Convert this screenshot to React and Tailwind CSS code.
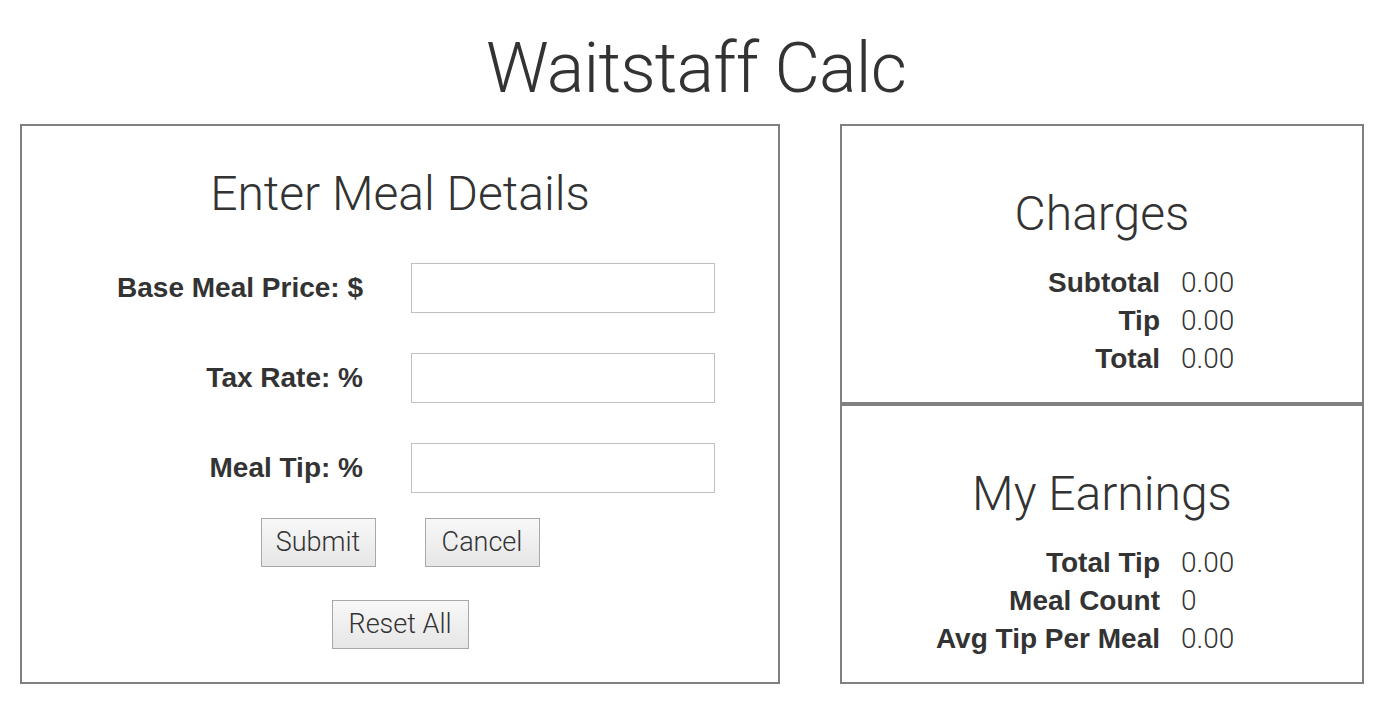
import * as React from "react";

const light = { fontFamily: "Roboto, 'Liberation Sans', sans-serif" };
const bold = { fontFamily: "'Liberation Sans', Arial, sans-serif" };

function Field({ label }) {
  return (
    <div className="flex items-center h-[50px]">
      <label className="w-[341px] text-right text-[28px] font-bold text-[#333]" style={bold}>{label}</label>
      <input type="text" className="ml-[48px] w-[304px] h-[50px] border border-[#c0c0c0] bg-white outline-none" />
    </div>
  );
}

function Btn({ children, w }) {
  return (
    <button className={`${w} h-[49px] border border-[#a8a8a8] bg-gradient-to-b from-[#f8f8f8] to-[#e6e6e6] text-[27px] font-light text-[#333]`} style={light}>
      {children}
    </button>
  );
}

function Stats({ title, rows }) {
  return (
    <div className="h-[280px] border-2 border-[#808080]">
      <h2 className="mt-[58px] text-center text-[48px] leading-[60px] font-light text-[#333]" style={light}>{title}</h2>
      <div className="mt-[20px]">
        {rows.map(([k, v]) => (
          <div key={k} className="flex h-[38px] items-center">
            <span className="w-[318px] text-right text-[28px] font-bold text-[#333]" style={bold}>{k}</span>
            <span className="ml-[21px] text-[28px] font-light text-[#333]" style={light}>{v}</span>
          </div>
        ))}
      </div>
    </div>
  );
}

export default function App() {
  return (
    <div className="bg-white min-h-screen text-[#333]">
      <h1 className="pt-[26px] h-[124px] text-center text-[70px] leading-[84px] tracking-[-0.8px] font-light" style={light}>Waitstaff Calc</h1>
      <div className="flex pl-[20px] gap-[60px]">
        <div className="w-[760px] h-[560px] border-2 border-[#808080]">
          <h2 className="mt-[38px] text-center text-[48px] leading-[60px] font-light" style={light}>Enter Meal Details</h2>
          <div className="mt-[39px] flex flex-col gap-[40px]">
            <Field label="Base Meal Price: $" />
            <Field label="Tax Rate: %" />
            <Field label="Meal Tip: %" />
          </div>
          <div className="mt-[25px] flex justify-center gap-[49px]">
            <Btn w="w-[115px]">Submit</Btn>
            <Btn w="w-[115px]">Cancel</Btn>
          </div>
          <div className="mt-[33px] flex justify-center">
            <Btn w="w-[137px]">Reset All</Btn>
          </div>
        </div>
        <div className="w-[524px]">
          <Stats title="Charges" rows={[["Subtotal", "0.00"], ["Tip", "0.00"], ["Total", "0.00"]]} />
          <Stats title="My Earnings" rows={[["Total Tip", "0.00"], ["Meal Count", "0"], ["Avg Tip Per Meal", "0.00"]]} />
        </div>
      </div>
    </div>
  );
}
